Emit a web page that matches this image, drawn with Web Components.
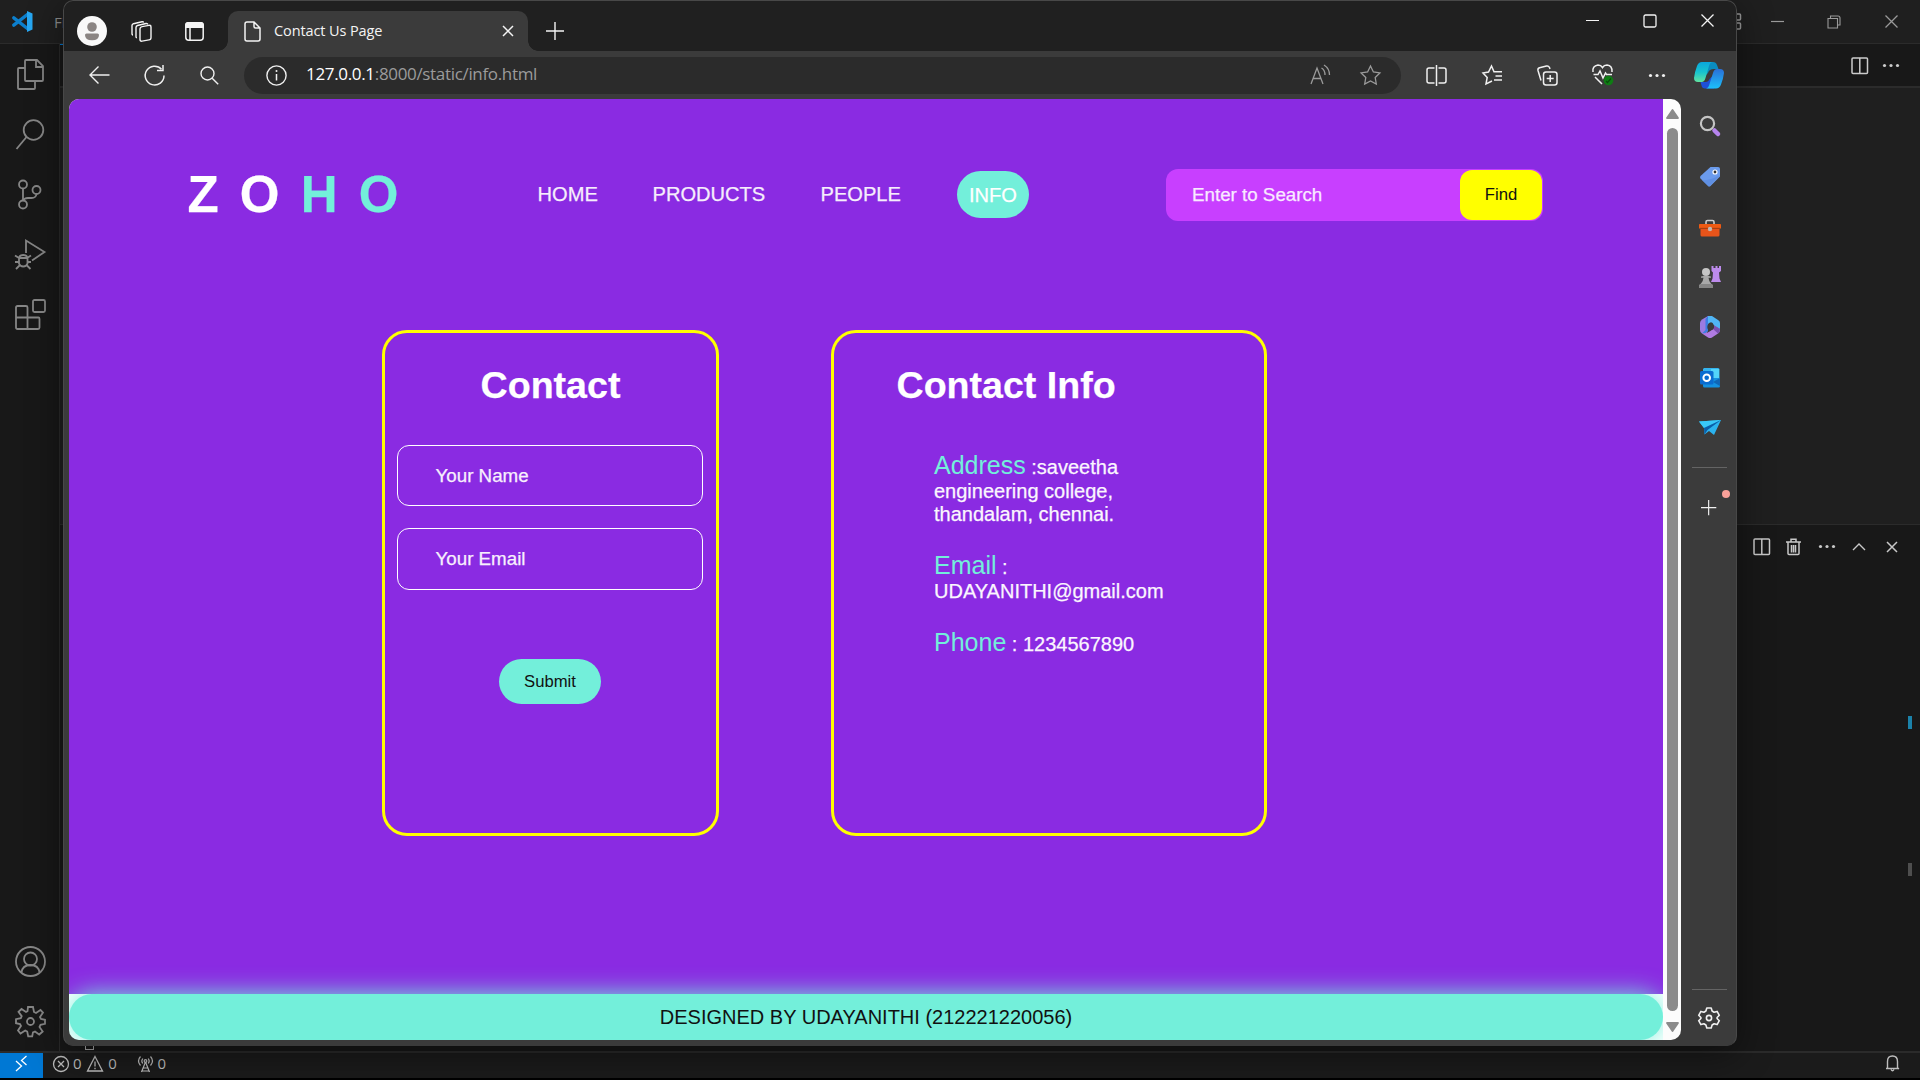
<!DOCTYPE html>
<html lang="en">
<head>
<meta charset="utf-8">
<title>Contact Us Page</title>
<style>
html,body{margin:0;width:1920px;height:1080px;overflow:hidden;background:#000;font-family:"Liberation Sans",Arial,sans-serif}
</style>
</head>
<body>
<desktop-screen></desktop-screen>
<script>
const ICONS = {
  vscode: [21,21,'<path d="M1.800 6.800 16 18M1.800 14.200 16 3" stroke="#0c7fcd" stroke-width="3.400" stroke-linecap="round"/><path d="M15 0 20.500 2.500V18.500L15 21z" fill="#27a7f2" stroke="none"/>'],
  files: [28,31,'<path d="M9 2q0-1 1-1h11l6 6v14q0 1-1 1H10q-1 0-1-1zM20 1v7h7M9 9H3q-1 0-1 1v19q0 1 1 1h15q1 0 1-1v-7"/>'],
  search: [30,31,'<circle cx="18.500" cy="11" r="9.800"/><path d="M11.500 18 1.500 30"/>'],
  branch: [26,31,'<circle cx="6" cy="5.500" r="4"/><circle cx="6" cy="25.500" r="4"/><circle cx="19.500" cy="11" r="4"/><path d="M6 9.500v12M19.500 15q-.500 4-5 4H11q-4 0-5 3"/>'],
  debug: [31,31,'<path d="M11 14V1.500L29.500 13 17 21.500"/><path d="M3.500 19h9M4 19v5.500a4.500 4.500 0 0 0 8.500 0V19M4 20q0-4 4.250-4t4.250 4M0 16.500l4 2.500M16 16.500l-4 2.500M0 23h4M12.500 23H16M1 30l3.500-3.500M15.500 30 12 26.500"/>'],
  ext: [31,31,'<rect x="18" y="1" width="12" height="12" rx="1.500"/><path d="M1 8.500q0-1.500 1.500-1.500H11q1.500 0 1.500 1.500V30H2.500Q1 30 1 28.500zM1 18.500h22.500q1 0 1 1.500v8.500q0 1.500-1.500 1.500H12"/>'],
  account: [31,31,'<circle cx="15.500" cy="15.500" r="14.500"/><circle cx="15.500" cy="13" r="6.500"/><path d="M6.500 26.500q1-7.500 9-7.500t9 7.500"/>'],
  gear8: [31,31,'<path d="M13 1h5l1 5 2 1 4.500-3L28 6.500 25 11l1 2 4 .8v4l-4.500 1-1 2.200 3.200 4.500-3.500 3L20 25.500l-2 .8-.8 4h-4l-1-4.800-2-1L5.500 27.500 3 24.500 6 20l-1-2-4-.8v-4l4.800-1 .9-2L3.500 5.800 6.500 3 11 6l1.500-.8z"/><circle cx="15.500" cy="15.500" r="3.500"/>'],
  min: [13,13,'<path d="M0 6.500h13" stroke-width="1.200"/>'],
  max: [14,14,'<rect x="1" y="1" width="12" height="12" rx="1.500" stroke-width="1.300"/>'],
  restore: [14,14,'<path d="M1 3.500h9.500V13H1zM3.500 3.500V1H11q2 0 2 2v7h-2" stroke-width="1.100"/>'],
  close: [13,13,'<path d="M.500.500l12 12M12.500.500l-12 12" stroke-width="1.300"/>'],
  layout: [5,17,'<path d="M0 1h2.500q1 0 1 1v4q0 1-1 1H0M0 10h2.500q1 0 1 1v4q0 1-1 1H0" stroke-width="1.500"/>'],
  split: [18,18,'<rect x="1" y="1" width="15.500" height="15.500" rx="1" stroke-width="1.500"/><path d="M8.800 1v15.500" stroke-width="1.500"/>'],
  trash: [16,18,'<path d="M0 4h15M5 3.500V1.200h5v2.300M2 4.500v11q0 1 1 1h9q1 0 1-1v-11M5.500 7v7.500M7.500 7v7.500M9.500 7v7.500" stroke-width="1.500"/>'],
  dots: [18,5,'<g fill="currentColor" stroke="none"><circle cx="2.500" cy="2.500" r="1.600"/><circle cx="9" cy="2.500" r="1.600"/><circle cx="15.500" cy="2.500" r="1.600"/></g>'],
  up: [14,9,'<path d="M1 8l6-6 6 6" stroke-width="1.400"/>'],
  remote: [13,17,'<path d="M1 6l5.500 5L1 16M11.500 1 6.500 5.500l5 4.500" stroke-width="1.300"/>'],
  error: [18,18,'<circle cx="9" cy="9" r="7.500" stroke-width="1.300"/><path d="M6 6l6 6M12 6l-6 6" stroke-width="1.300"/>'],
  warn: [18,18,'<path d="M9 1.500 16.500 16h-15zM9 6.500v5M9 12.700v1.500" stroke-width="1.300"/>'],
  antenna: [17,18,'<path d="M8.500 7 4.500 17M8.500 7l4 10M6 13h5M5 16h7M3.500 1.500q-4 4.500 0 9M13.500 1.500q4 4.500 0 9M5.800 3.500q-2 2.500 0 5M11.200 3.500q2 2.500 0 5" stroke-width="1.200"/><circle cx="8.500" cy="6" r="1.300" stroke-width="1.200"/>'],
  bell: [15,17,'<path d="M1 13.500h13M2.500 13V6.500Q2.500 1 7.500 1t5 5.500V13l1.500 1M6 14.500q1.500 2.500 3 0" stroke-width="1.400"/>'],
  avatar: [30,30,'<circle cx="15" cy="15" r="15" fill="#f9f9f9" stroke="none"/><g fill="#8b8583" stroke="none"><circle cx="15" cy="11" r="4.800"/><path d="M8 19q0-1.500 1.500-1.500h11q1.500 0 1.500 1.500 0 5.300-7 5.300T8 19z"/></g>'],
  workspaces: [21,21,'<g stroke-width="1.400"><rect x="0" y="0" width="11" height="14.500" rx="2" transform="matrix(1 -.18 0 1 9 6)"/><path d="M6 16.500q-1 .3-1-1V6.500q0-1.500 1.500-2L15 2.500q1.500-.300 2 1M2 14q-1 0-1-1.500v-8Q1 3.200 2.500 2.700L11 .800q1.300-.200 1.800.7"/></g>'],
  tabact: [19,19,'<rect x=".800" y=".800" width="17.400" height="17.400" rx="3" stroke-width="1.500"/><path d="M1 5V3q0-2 2-2h13q2 0 2 2v2z" fill="currentColor"/><path d="M5 5v13" stroke-width="1.500"/>'],
  page: [17,21,'<path d="M3 1h7l6 6v11q0 2-2 2H3q-2 0-2-2V3q0-2 2-2zM10 1v4.500Q10 7 11.500 7H16" stroke-width="1.500"/>'],
  x: [12,12,'<path d="M1 1l10 10M11 1 1 11" stroke-width="1.500"/>'],
  plus: [18,18,'<path d="M9 0v18M0 9h18" stroke-width="1.400"/>'],
  back: [21,18,'<path d="M20.500 9H1M9.500.500 1 9l8.500 8.500" stroke-width="1.400"/>'],
  reload: [21,21,'<path d="M17.500 4.200A9.400 9.400 0 1 0 20 10.500M19 0v5.500h-6" stroke-width="1.500"/>'],
  find: [19,19,'<circle cx="7.500" cy="7.500" r="6.500" stroke-width="1.400"/><path d="M12.200 12.200l6 6" stroke-width="1.400"/>'],
  info: [21,21,'<circle cx="10.500" cy="10.500" r="9.600" stroke-width="1.400"/><path d="M10.500 9v6.500" stroke-width="1.500"/><circle cx="10.500" cy="6" r="1" fill="currentColor" stroke="none"/>'],
  aloud: [21,20,'<path d="M1 19 7 3l6 16M3 13.500h8M11.500 3q3.500 2 3.500 7M14 0q5.500 3.500 5.500 10" stroke-width="1.300"/>'],
  star: [21,20,'<path d="M10.500 1l2.900 6 6.500.9-4.700 4.600 1.100 6.500-5.800-3.100L4.700 19l1.100-6.500L1.100 7.900 7.600 7z" stroke-width="1.300"/>'],
  splitw: [21,21,'<path d="M8.500 3H3Q1 3 1 5v11q0 2 2 2h5.500M12.500 3H18q2 0 2 2v11q0 2-2 2h-5.500M10.500 0v21" stroke-width="1.500"/>'],
  favs: [21,20,'<path d="M14 6.800H12L9.500 1l-3 6L1 7.900l4.200 4.600L4 19l6-3M13 6.800h7M13.500 11H20M12 15h8" stroke-width="1.500"/>'],
  collect: [21,21,'<rect x="6.500" y="7" width="13.500" height="13" rx="2.500" stroke-width="1.500"/><path d="M13.200 10v7M9.700 13.500h7M4 15.500 1 5.500Q.500 3.500 2.500 2.800L9.500 1q2-.500 3 1.500l.5 1.500" stroke-width="1.500"/>'],
  heart: [22,22,'<path d="M1 8q-1-6 5-7 3 0 4.500 2.500Q12 1 15 1q5.500.500 5 7M1.500 10.500H6l2-3.500 3 7 2.500-5 1 1.500H20M3 13l7 7" stroke-width="1.500"/><circle cx="16.500" cy="16.500" r="4.800" fill="#0f7d14" stroke="none"/><path d="M14 17l1.500 1.500 3.500-4" stroke="#0a4d0c" stroke-width="1.200"/>'],
  copilot: [30,27,'<defs><linearGradient id="a" x1="0" y1="0" x2="0" y2="1"><stop offset="0" stop-color="#0aa7dd"/><stop offset=".5" stop-color="#17c3cf"/><stop offset="1" stop-color="#62e3a0"/></linearGradient><linearGradient id="b" x1="0" y1="0" x2="0" y2="1"><stop offset="0" stop-color="#2a6fd8"/><stop offset="1" stop-color="#1cc0fa"/></linearGradient></defs><g stroke="none"><path d="M10 0h9q3 0 4 3l1.500 4H20q-5 0-6 4l-3 3z" fill="#0a8cc0"/><path d="M20 26.500h-9q-3 0-3.500-3L6.500 20h5q3 0 4-3l4-4z" fill="#1d50d8"/><path d="M8 0h11q-3 0-4 4l-3.500 12q-1 4-4 4H4Q0 20 0 16q1-7 3-12Q4.500 0 8 0z" fill="url(#a)"/><path d="M22 26.500H12q2.500-.500 3.500-4.500l3.500-11q1-4 4-4h3q4 0 4 4-1 7-3 11.500-1.500 4-5 4z" fill="url(#b)"/></g>'],
  sSearch: [22,22,'<circle cx="8.500" cy="8.500" r="6.600" stroke="#c4c4c4" stroke-width="2.200"/><path d="M15.500 15.500l3.500 3.500" stroke="#b684ee" stroke-width="4.500" stroke-linecap="round"/>'],
  sTag: [22,22,'<path d="M11.500 1H19q2 0 2 2v7.500L11.500 20q-1.200 1-2.500 0l-7.500-7.500q-1-1.200 0-2.500z" fill="#6b9bec" stroke="none"/><path d="M21 9 10 20.500 3 14q8 1 18-5z" fill="#5f8fe2" stroke="none"/><circle cx="16" cy="6" r="2" fill="#333" stroke="#fff" stroke-width="1.200"/>'],
  sBox: [22,18,'<path d="M7 5V3q0-1.500 1.500-1.500h5q1.500 0 1.500 1.500v2" stroke="#ccc" stroke-width="1.600"/><path d="M1.500 10h19v6q0 1.500-1.500 1.500H3q-1.500 0-1.500-1.500z" fill="#e8541a" stroke="none"/><path d="M0 5.500Q0 5 1 5h20q1 0 1 .500V9.500H0z" fill="#ef5a12" stroke="none"/><path d="M1 9.300h20" stroke="#b53a08" stroke-width=".8"/><circle cx="11" cy="10" r="2.200" fill="#c3b7b0" stroke="none"/>'],
  sChess: [22,22,'<g stroke="none"><path d="M12.500 0h2v2h2V0h2v2h1.500V0H22v5l-2 1.500.5 6L22 16H12l1.500-3.500.5-6-1.500-1.500z" fill="#bd8bec"/><circle cx="7" cy="6" r="4" fill="#c5c5c5"/><path d="M2 10.500Q7 9 12 10.500v1.300H9.500Q10 16 12 17.500l2 2V21q0 1-1 1H1q-1 0-1-1v-1.500l2-2Q4 16 4.500 11.800H2z" fill="#a8a8a8"/><path d="M0 20q0-2 2-2h10q2 0 2 2v1q0 1-1 1H1q-1 0-1-1z" fill="#858585"/></g>'],
  sM365: [20,22,'<g stroke="none"><path d="M8 0h4l6 4q2 1 2 3v6l-6-3.500Q12 4 8 8z" fill="#50b5f5"/><path d="M8 0 2 3.500Q0 5 0 7v7q0 2 2 3.500L4 18q4-1 4-5z" fill="#9a7be0"/><path d="M8 0 5.500 3v11L2 17.500Q5 18 8 15V0z" fill="#3b7ee2"/><path d="M20 13v1q0 2-2 3.500l-6 4q-2 1-4 0L2 17.500q6 0 11-4.500 2-1 1-3.500z" fill="#b07be2"/><path d="M20 13q0 3-2 4.500l-5-4.500q1.500-1 1-3.500z" fill="#7a4fb0"/><circle cx="10.500" cy="11" r="3.200" fill="#3b3b3b"/></g>'],
  sOutlook: [20,20,'<g stroke="none"><path d="M4 0h14q1.500 0 1.500 1.500V12H3V1z" fill="#34b3ee"/><path d="M11 1h8v9h-8z" fill="#52d4fa"/><path d="M3 10h17v8q0 1.500-1.500 1.500h-14Q3 19.500 3 18z" fill="#1490df"/><path d="M20 10v8l-7-4z" fill="#1066b5"/><rect y="3" width="13.500" height="13.500" rx="1.500" fill="#0a6cd0"/></g><circle cx="6.700" cy="9.800" r="3.300" stroke="#fff" stroke-width="2"/>'],
  sPlane: [22,15,'<g stroke="none"><path d="M0 1.500 22 0l-7 15-5-4-4.500 3.500L5 8z" fill="#2bb3ef"/><path d="M0 1.500 22 0 5 8z" fill="#39c8f8"/><path d="M22 0 8.500 10 5.500 14.500 5 8z" fill="#0b5ea8"/></g>'],
  gear6: [22,22,'<path d="M8.800 1h4.400l.9 3 2 1.200 3-.8 2.200 3.900-2.200 2.200v1l2.200 2.200-2.200 3.900-3-.8-2 1.200-.9 3H8.800l-.9-3-2-1.200-3 .8L.700 13.700l2.200-2.200v-1L.700 8.300l2.200-3.900 3 .8 2-1.200z" stroke-width="1.600" stroke-linejoin="round"/><circle cx="11" cy="11" r="2.600" stroke-width="1.600"/>'],
  arrUp: [13,10,'<path d="M6.500 1 12 9H1z" fill="#8b8b8b" stroke="#8b8b8b" stroke-linejoin="round"/>'],
  arrDown: [13,10,'<path d="M6.500 9 12 1H1z" fill="#8b8b8b" stroke="#8b8b8b" stroke-linejoin="round"/>']
};

function define(name, html, setup){
  const t = document.createElement('template');
  t.innerHTML = html;
  customElements.define(name, class extends HTMLElement{
    constructor(){
      super();
      this.attachShadow({mode:'open'}).append(t.content.cloneNode(true));
    }
    connectedCallback(){ if(setup) setup(this, this.shadowRoot); }
  });
}

define('ui-icon', '<style>:host{display:block;flex:none;line-height:0}svg{display:block;overflow:visible}</style><div></div>', (el, root) => {
  const [w,h,body] = ICONS[el.getAttribute('name')];
  root.querySelector('div').innerHTML = `<svg width="${w}" height="${h}" viewBox="0 0 ${w} ${h}" fill="none" stroke="currentColor" stroke-width="1.800">${body}</svg>`;
});

/* ---------- code editor behind the browser ---------- */
define('activity-bar', `<style>
:host{display:flex;flex-direction:column;align-items:center;box-sizing:border-box;width:60px;flex:none;border-right:1px solid #2b2b2b;background:#181818;color:#868686;padding:15px 0 14px 1px}
div{height:60px;display:flex;align-items:flex-start;justify-content:center;flex:none}
div.last{height:31px}
.spring{flex:1;height:auto}
</style>
<div><ui-icon name="files"></ui-icon></div><div><ui-icon name="search"></ui-icon></div><div><ui-icon name="branch"></ui-icon></div><div><ui-icon name="debug"></ui-icon></div><div><ui-icon name="ext"></ui-icon></div>
<div class="spring"></div>
<div><ui-icon name="account"></ui-icon></div><div class="last"><ui-icon name="gear8"></ui-icon></div>`);

define('editor-titlebar', `<style>
:host{display:flex;align-items:center;height:44px;box-sizing:border-box;background:#1f1f1f;border-bottom:1px solid #2b2b2b;color:#9a9a9a;padding:0 22px 0 12px;font:15px/20px "Open Sans","Noto Sans",sans-serif}
span{margin:1px 0 0 21px;color:#8c8c8c}
.r{margin-left:auto;display:flex;align-items:center}
</style>
<ui-icon name="vscode"></ui-icon><span>Fi</span>
<div class="r"><ui-icon name="layout"></ui-icon><ui-icon name="min" style="margin-left:29px"></ui-icon><ui-icon name="restore" style="margin-left:43px"></ui-icon><ui-icon name="close" style="margin-left:44px"></ui-icon></div>`);

define('editor-area', `<style>
:host{display:flex;flex-direction:column;flex:1;background:#1f1f1f}
.accent{width:4px;height:1px;background:#0078d4}
.tabs{height:41px;background:#181818;display:flex;align-items:center;justify-content:flex-end;padding:0 20px 0 0;color:#ccc;gap:13px}
.top{background:#181818}
.rule{height:2px;background:#2b2b2b}
.code{height:436px}
.panel{flex:1;background:#181818;border-top:1px solid #2b2b2b;color:#c8c8c8}
.tools{display:flex;align-items:center;justify-content:flex-end;height:43px;padding-right:22px}
.marks{display:flex;flex-direction:column;align-items:flex-end;padding:148px 8px 0 0;gap:134px}
.marks i{width:4px;height:13px;background:#1b82aa}.marks i+i{background:#4e4e4e}
.box{width:7px;height:5px;border:1px solid #aaa;margin:167px 0 0 25px}
</style>
<div class="top"><div class="accent"></div></div><div class="tabs"><ui-icon name="split"></ui-icon><ui-icon name="dots"></ui-icon></div><div class="rule"></div>
<div class="code"></div>
<div class="panel"><div class="tools"><ui-icon name="split"></ui-icon><ui-icon name="trash" style="margin-left:15px"></ui-icon><ui-icon name="dots" style="margin-left:16px"></ui-icon><ui-icon name="up" style="margin-left:16px"></ui-icon><ui-icon name="x" style="margin-left:20px"></ui-icon></div>
<div class="marks"><i></i><i></i></div><div class="box"></div></div>`);

define('status-bar', `<style>
:host{display:flex;align-items:center;box-sizing:border-box;height:27px;flex:none;border-top:2px solid #2b2b2b;background:#1b1b1b;color:#bdbdbd;font:14px/20px "Open Sans","Noto Sans",sans-serif;padding-right:20px}
.remote{width:43px;height:25px;background:#0078d4;color:#fff;display:flex;align-items:center;justify-content:center}
span{font-size:15px;margin-top:-5px;letter-spacing:-.4px}.bell{margin-left:auto}
</style>
<div class="remote"><ui-icon name="remote" style="margin-top:-4px"></ui-icon></div>
<ui-icon name="error" style="margin:-4px 3px 0 9px"></ui-icon><span>0</span><ui-icon name="warn" style="margin:-4px 4px 0 5px"></ui-icon><span>0</span><ui-icon name="antenna" style="margin:-4px 3px 0 21px"></ui-icon><span>0</span>
<ui-icon class="bell" name="bell" style="margin-top:-4px"></ui-icon>`);

/* ---------- browser chrome ---------- */
define('tab-strip', `<style>
:host{display:flex;height:51px;flex:none;background:#202020;color:#f4f4f4;padding-left:14px;align-items:flex-start}
.tab{position:relative;box-sizing:border-box;width:300px;height:40px;margin:11px 0 0 24px;background:#3b3b3b;border-radius:10px 10px 0 0;display:flex;align-items:center;padding:0 14px 0 16px;font:14.5px/20px "Open Sans","Noto Sans",sans-serif}
.tab::before,.tab::after{content:"";position:absolute;bottom:0;width:10px;height:10px}
.tab::before{left:-10px;background:radial-gradient(circle at 0 0,transparent 9.500px,#3b3b3b 10px)}
.tab::after{right:-10px;background:radial-gradient(circle at 100% 0,transparent 9.500px,#3b3b3b 10px)}
span{margin:-1px auto 0 13px;white-space:nowrap;letter-spacing:-.1px}
.win{margin:14px 23px 0 auto;display:flex;gap:44px}
</style>
<ui-icon name="avatar" style="margin-top:16px"></ui-icon><ui-icon name="workspaces" style="margin:21px 0 0 24px"></ui-icon><ui-icon name="tabact" style="margin:22px 0 0 33px"></ui-icon>
<div class="tab"><ui-icon name="page"></ui-icon><span>Contact Us Page</span><ui-icon name="x"></ui-icon></div>
<ui-icon name="plus" style="margin:22px 0 0 18px"></ui-icon>
<div class="win"><ui-icon name="min"></ui-icon><ui-icon name="max"></ui-icon><ui-icon name="close"></ui-icon></div>`);

define('tool-bar', `<style>
:host{display:flex;height:48px;flex:none;align-items:center;background:#3b3b3b;color:#f0f0f0;padding-left:25.500px}
.url{box-sizing:border-box;width:1157px;height:37px;margin-left:25.500px;border-radius:19px;background:#2b2b2b;display:flex;align-items:center;padding:0 20px 0 22px;font:17px/24px "Open Sans","Noto Sans",sans-serif}
.url span{margin:-2px auto 0 19px;letter-spacing:-.33px;white-space:nowrap;color:#9b9b9b}b{font-weight:400;color:#fff}
.g{color:#9b9b9b}
.g2{margin-left:29px}
</style>
<ui-icon name="back"></ui-icon><ui-icon name="reload" style="margin-left:34px"></ui-icon><ui-icon name="find" style="margin-left:35px"></ui-icon>
<div class="url"><ui-icon name="info"></ui-icon><span><b>127.0.0.1</b>:8000/static/info.html</span><ui-icon class="g" name="aloud"></ui-icon><ui-icon class="g g2" name="star"></ui-icon></div>
<ui-icon name="splitw" style="margin-left:25px"></ui-icon><ui-icon name="favs" style="margin-left:35px"></ui-icon><ui-icon name="collect" style="margin-left:34px"></ui-icon><ui-icon name="heart" style="margin-left:34px"></ui-icon><ui-icon name="dots" style="margin-left:34px"></ui-icon><ui-icon name="copilot" style="margin-left:28px"></ui-icon>`);

define('side-bar', `<style>
:host{display:flex;flex-direction:column;align-items:center;width:56px;flex:none;box-sizing:border-box;padding-left:1px;color:#f0f0f0}
hr{border:0;height:1px;width:35px;background:#646464;margin:0}
.add{display:flex;align-items:flex-start;position:relative;margin:32px 0 0 -2px}
.add i{position:absolute;right:-14px;top:-10px;width:8px;height:8px;border-radius:50%;background:#f9a199}
.spring{flex:1}
</style>
<ui-icon name="sSearch" style="margin-top:16px"></ui-icon><ui-icon name="sTag" style="margin-top:29px"></ui-icon><ui-icon name="sBox" style="margin-top:31px"></ui-icon><ui-icon name="sChess" style="margin-top:29px"></ui-icon><ui-icon name="sM365" style="margin-top:28px"></ui-icon><ui-icon name="sOutlook" style="margin-top:30px"></ui-icon><ui-icon name="sPlane" style="margin-top:32px"></ui-icon>
<hr style="margin-top:32px"><div class="add"><ui-icon name="plus" style="zoom:.85"></ui-icon><i></i></div>
<div class="spring"></div><hr><ui-icon name="gear6" style="margin:17px 0 11px -1px"></ui-icon>`);

define('scroll-track', `<style>
:host{display:flex;flex-direction:column;align-items:center;width:18px;flex:none;background:#fcfcfc;padding:10px 0 8px;box-sizing:border-box}
div{width:11px;flex:1;margin:9px 0 11px 1px;background:#8b8b8b;border-radius:6px}
</style><ui-icon name="arrUp"></ui-icon><div></div><ui-icon name="arrDown"></ui-icon>`);

/* ---------- web page ---------- */
define('nav-link', `<style>
:host{display:block;font-size:20.100px;line-height:24px;color:#f6eefc;white-space:nowrap}
:host([active]){background:#73efda;border-radius:24px;padding:12px;height:23px;width:48px;text-align:center;color:#fff}
</style><slot></slot>`);

define('site-header', `<style>
:host{display:flex;align-items:flex-start;height:231px;padding-left:118.500px;color:#fff}
h1{margin:66px 0 0;font-size:51px;line-height:60px;letter-spacing:21.200px;width:350px;white-space:nowrap}
h1 span{color:#73efda}
nav{display:flex;align-items:flex-start;padding-top:83px;width:628.500px}
nav nav-link[active]{margin-top:-11px}
.search{box-sizing:border-box;margin-top:70px;width:377px;height:52px;border-radius:12px;background:#c83fff;display:flex;align-items:center;padding:0 1px 0 26px;font-size:18.750px;color:#f9eaff}
.search span{margin-right:auto}
button{all:unset;width:82px;height:50px;border-radius:12px;background:#ff0;color:#111;font-size:16.670px;text-align:center;-webkit-text-stroke:0}
</style>
<h1>ZO<span>HO</span></h1>
<nav><nav-link style="width:115px">HOME</nav-link><nav-link style="width:168px">PRODUCTS</nav-link><nav-link style="width:136.500px">PEOPLE</nav-link><nav-link active>INFO</nav-link></nav>
<div class="search"><span>Enter to Search</span><button>Find</button></div>`);

define('outline-card', `<style>
:host{display:block;box-sizing:border-box;height:506px;border:3px solid #ff0;border-radius:25px;color:#fff}
h2{margin:29px 0 0;font-size:37.600px;line-height:46px;white-space:nowrap}
:host([center]) h2{text-align:center}
:host(:not([center])) h2{padding-left:62.500px}
</style><h2><slot name="title"></slot></h2><slot></slot>`);

define('text-field', `<style>
:host{display:flex;align-items:center;box-sizing:border-box;width:306px;height:61px;border:1px solid #fff;border-radius:12px;padding-left:37.500px;font-size:18.750px;color:#f8f0fd}
</style><slot></slot>`);

define('contact-form', `<style>
:host{display:flex;flex-direction:column;align-items:flex-start;padding:37px 0 0 12px}
button{all:unset;box-sizing:border-box;width:102px;height:45px;border-radius:23px;background:#73efda;color:#111;font-size:16.670px;line-height:41px;text-align:center;margin:69px 0 0 102px;-webkit-text-stroke:0}
</style>
<text-field>Your Name</text-field><text-field style="margin-top:22px;height:62px">Your Email</text-field><button>Submit</button>`);

define('info-list', `<style>
:host{display:block;padding:43px 0 0 100px;font-size:20px;line-height:23.700px;color:#fbf6fe}
p{margin:0 0 24px;width:235px;white-space:nowrap}
p>span{font-size:25px;line-height:28px;color:#73efda;-webkit-text-stroke:0}
</style>
<p><span>Address</span> :saveetha<br>engineering college,<br>thandalam, chennai.</p>
<p><span>Email</span> :<br>UDAYANITHI@gmail.com</p>
<p><span>Phone</span> : 1234567890</p>`);

define('site-page', `<style>
:host{display:flex;flex-direction:column;flex:1;background:#fff;overflow:hidden;-webkit-text-stroke:.25px currentColor}
.main{height:895px;background:#8a2be2}
.cards{display:flex;gap:112px;padding-left:313px}
footer{height:46px;line-height:46px;border-radius:25px;background:#73efda;box-shadow:0 0 25px #73efda;text-align:center;font-size:20px;color:#111;-webkit-text-stroke:0}
</style>
<div class="main"><site-header></site-header>
<div class="cards"><outline-card center style="width:337px"><span slot="title">Contact</span><contact-form></contact-form></outline-card>
<outline-card style="width:436px"><span slot="title">Contact Info</span><info-list></info-list></outline-card></div></div>
<footer>DESIGNED BY UDAYANITHI (212221220056)</footer>`);

define('browser-window', `<style>
:host{display:flex;flex-direction:column;width:1674px;height:1046px;border-radius:10px;overflow:hidden;background:#3b3b3b;box-shadow:0 8px 36px rgba(0,0,0,.45)}
.body{display:flex;flex:1;padding:0 0 6px 6px}
.view{display:flex;width:1612px;border-radius:10px;overflow:hidden}
.edge{position:absolute;inset:0;border:1px solid #484848;border-bottom-color:#3b3b3b;border-radius:10px;pointer-events:none}
</style>
<tab-strip></tab-strip><tool-bar></tool-bar>
<div class="body"><div class="view"><site-page></site-page><scroll-track></scroll-track></div><side-bar></side-bar></div><div class="edge"></div>`);

define('desktop-screen', `<style>
:host{display:flex;flex-direction:column;position:relative;width:1920px;height:1080px;overflow:hidden;background:#000}
.mid{display:flex;height:1007px}
browser-window{position:absolute;left:63px;top:0}
</style>
<editor-titlebar></editor-titlebar>
<div class="mid"><activity-bar></activity-bar><editor-area></editor-area></div>
<status-bar></status-bar>
<browser-window></browser-window>`);
</script>
</body>
</html>
